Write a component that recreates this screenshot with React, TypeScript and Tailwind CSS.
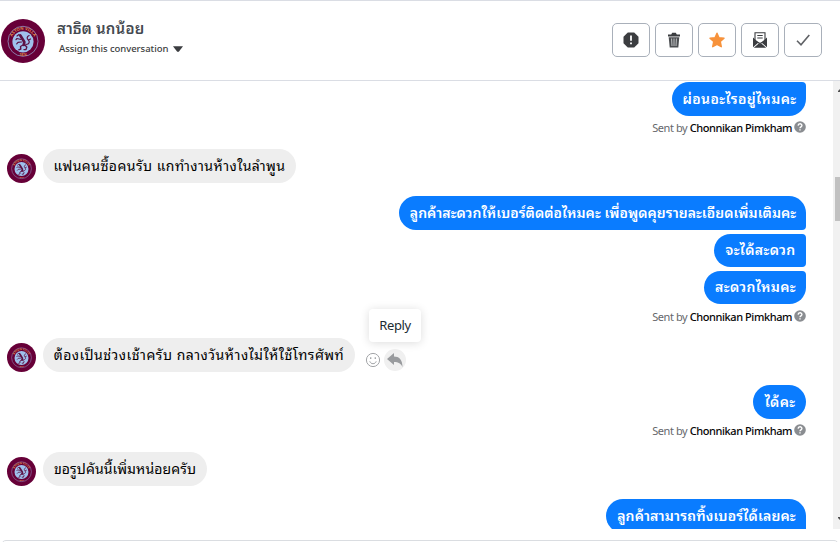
import clsx from 'clsx';

type Corner = 'first' | 'middle' | 'last' | 'single';

function Crest({ id, className }: { id: string; className: string }) {
  return (
    <svg viewBox="0 0 44 44" className={clsx('block shrink-0', className)}>
      <circle cx="22" cy="22" r="22" fill="#670038" />
      <circle cx="22" cy="22.3" r="15" fill="none" stroke="#8f86b4" strokeWidth="0.9" />
      <circle cx="22" cy="22.8" r="10.600" fill="#9fc1ec" />
      <path id={id} d="M10.600 19.500a11.800 11.800 0 0 1 22.800 0" fill="none" />
      <text fontSize="4.2" fontWeight="700" fill="#e08a45">
        <textPath href={`#${id}`} startOffset="50%" textAnchor="middle">
          ASTON VILLA
        </textPath>
      </text>
      <text x="22" y="36.500" fontSize="3" fontWeight="700" textAnchor="middle" fill="#e08a45">
        1874
      </text>
      {/* rampant lion */}
      <g fill="none" stroke="#5c1345" strokeLinecap="round" strokeLinejoin="round">
        <path d="M19.300 16.500l2.200 3.500 1.800 3-.5 3" strokeWidth="2.700" />
        <path d="M18 15.500l-2 1.500M20 20.500l-4-1-1 1.200M20.500 23l-3.500.3-1.300 1.500" strokeWidth="1.200" />
        <path d="M22 26l-2.500 1.500.3 2.500-2 .8M23.800 26l2 2-.8 2.600h-2" strokeWidth="1.400" />
        <path d="M25 25.500c3.500 0 4-3 2.300-4.500s-1.500-3.500.8-4.500M27.500 21l2-1" strokeWidth="1.200" />
      </g>
    </svg>
  );
}

const bubbleShape: Record<Corner, string> = {
  first: 'rounded-[17px] rounded-br-[4px]',
  middle: 'rounded-l-[17px] rounded-r-[4px]',
  last: 'rounded-[17px] rounded-tr-[4px]',
  single: 'rounded-[17px]',
};

function Outgoing({ text, corner, className }: { text: string; corner: Corner; className: string }) {
  return (
    <div
      className={clsx(
        'ml-auto flex shrink-0 items-center justify-center whitespace-nowrap bg-[#0a7cff] pb-[2px] pl-px font-semibold text-white',
        bubbleShape[corner],
        className
      )}
    >
      {text}
    </div>
  );
}

function Incoming({ id, text, className }: { id: string; text: string; className: string }) {
  return (
    <div className="flex h-[34px] shrink-0 items-end gap-[7px]">
      <Crest id={id} className="size-[29px]" />
      <div
        className={clsx(
          'flex h-[34px] items-center justify-center whitespace-nowrap rounded-[17px] bg-[#eee] pb-[2px] text-black',
          className
        )}
      >
        {text}
      </div>
    </div>
  );
}

function SentBy() {
  return (
    <div className="mt-[5px] flex h-[14px] shrink-0 items-center justify-end gap-[2px] whitespace-nowrap text-[11px] tracking-[-0.42px] text-[#65676b]">
      <span>
        Sent by <span className="font-medium text-[#050505]">Chonnikan Pimkham</span>
      </span>
      <svg viewBox="0 0 12 12" className="mb-[2px] size-[12px]">
        <circle cx="6" cy="6" r="5.8" fill="#8a8d91" />
        <path d="M4.1 4.600c.1-2.400 3.800-2.300 3.800-.2 0 1.500-1.900 1.400-1.900 2.900M6 8.300v1.300" fill="none" stroke="#fff" strokeWidth="1.400" />
      </svg>
    </div>
  );
}

const actions = [
  {
    label: 'Move to spam',
    icon: (
      <>
        <path d="M4.800.5h6.400l4.300 4.300v6.400l-4.300 4.300H4.800L.5 11.200V4.800z" fill="#3b3d40" />
        <path d="M8 3.500v5.200M8 10.400v1.800" stroke="#fff" strokeWidth="1.800" />
      </>
    ),
  },
  {
    label: 'Delete',
    icon: (
      <>
        <path d="M2 2.500h3.200L6.200.8h3.600l1 1.700H14v2H2z" fill="#3b3d40" />
        <path d="M2.700 5.300h10.600l-1 10.200H3.700z" fill="#4b4d50" />
        <path d="M5.600 6.500l.4 7.500M8 6.500V14M10.400 6.500L10 14" stroke="#d0d2d4" strokeWidth=".9" />
      </>
    ),
  },
  {
    label: 'Follow up',
    icon: (
      <path
        d="M8 1.200l2 4.500 5 .6-3.700 3.300 1 5.100L8 12.300l-4.300 2.400 1-5.100L1 6.300l5-.6z"
        fill="#f7923b"
        stroke="#f7923b"
        strokeWidth="1.400"
        strokeLinejoin="round"
      />
    ),
  },
  {
    label: 'Mark as unread',
    icon: (
      <>
        <path d="M3 .8h10v8L8 11.500 3 8.800z" fill="#fff" stroke="#3b3d40" strokeWidth="1.100" />
        <path d="M5.300 3.500h5.400M5.300 6h5.400" stroke="#3b3d40" strokeWidth="1.100" />
        <path d="M1 5.500l5.500 5L1 15.200zM15 5.500l-5.500 5 5.500 4.700z" fill="#3b3d40" />
        <path d="M1.800 15.700l5-4.300L8 12.200l1.200-.8 5 4.300z" fill="#3b3d40" />
      </>
    ),
  },
  {
    label: 'Move to done',
    icon: <path d="M2 8.800l4 4L14.300 3" fill="none" stroke="#606266" strokeWidth="1.600" />,
  },
];

export default function App() {
  return (
    <div className="flex h-[542px] w-[840px] flex-col overflow-hidden bg-white font-['Noto_Sans','Noto_Sans_Thai_Looped','Loma','Waree','Tlwg_Typo','Garuda',sans-serif]">
      <header className="flex h-[81px] shrink-0 items-start border-y border-[#dadde4] pl-[1px] pr-[18px]">
        <Crest id="crest-header" className="mt-[18px] size-[44px]" />
        <div className="ml-[12px] mt-[16px]">
          <div className="h-[22px] text-[15px] font-semibold leading-[22px] tracking-[0.2px] text-[#444950]">สาธิต นกน้อย</div>
          <div className="flex h-[20px] items-center gap-[5px] pl-[2px] text-[9.5px] font-medium tracking-[-0.05px] text-[#3b3d40]">
            <span>Assign this conversation</span>
            <svg viewBox="0 0 10 6" className="h-[6px] w-[10px]">
              <path d="M0 .3h10L5.800 5.700H4.200z" fill="#3b3d40" />
            </svg>
          </div>
        </div>
        <div className="ml-auto mt-[22px] flex gap-[5px]">
          {actions.map(({ label, icon }) => (
            <button
              key={label}
              aria-label={label}
              className="flex h-[34px] w-[38px] items-center justify-center rounded-[5px] border border-[#a9b0ba]"
            >
              <svg viewBox="0 0 16 16" className="size-4">
                {icon}
              </svg>
            </button>
          ))}
        </div>
      </header>

      <main className="flex h-[448px] shrink-0 overflow-hidden text-[14px]">
        <div className="flex flex-1 flex-col pl-[7px] pr-[27px] pt-[1px]">
          <Outgoing text="ผ่อนอะไรอยู่ไหมคะ" corner="last" className="h-[34px] w-[134px] tracking-[0.4px]" />
          <SentBy />
          <div className="mt-[14px]">
            <Incoming id="crest-1" text="แฟนคนซื้อคนรับ แกทำงานห้างในลำพูน" className="w-[253px] tracking-[0.45px]" />
          </div>
          <Outgoing
            text="ลูกค้าสะดวกให้เบอร์ติดต่อไหมคะ เพื่อพูดคุยรายละเอียดเพิ่มเติมคะ"
            corner="first"
            className="mt-[13px] h-[34px] w-[407px] tracking-[0.05px]"
          />
          <Outgoing text="จะได้สะดวก" corner="middle" className="mt-[4px] h-[33px] w-[92px] tracking-[0.35px]" />
          <Outgoing text="สะดวกไหมคะ" corner="last" className="mt-[4px] h-[33px] w-[102px] tracking-[0.35px]" />
          <div className="pt-[1px]">
            <SentBy />
          </div>
          <div className="mt-[14px] flex shrink-0 items-center">
            <Incoming id="crest-2" text="ต้องเป็นช่วงเช้าครับ กลางวันห้างไม่ให้ใช้โทรศัพท์" className="w-[312px] tracking-[0.5px]" />
            <svg viewBox="0 0 16 16" className="ml-[10px] mt-[10px] size-4" fill="none" stroke="#a3a5a8">
              <circle cx="8" cy="8" r="6.600" />
              <path d="M4.800 9.300c.8 3.200 5.600 3.200 6.400 0" />
              <path d="M5.700 5.200v1.800M10.300 5.200v1.800" strokeWidth="1.300" />
            </svg>
            <div className="relative ml-[3px] mt-[10px] flex size-[22px] items-center justify-center rounded-full bg-[#f0f0f0]">
              <svg viewBox="0 0 16 16" className="size-4">
                <path d="M0 7l7-6v3.500c5 0 8.500 3 8.500 10.500-1.500-3.500-4-5-8.500-5V13z" fill="#999b9e" />
              </svg>
              <div className="absolute bottom-[29px] left-1/2 flex h-[33px] w-[52px] -translate-x-1/2 items-center justify-center rounded-[4px] bg-white text-[13px] tracking-[-0.35px] text-[#1c2b33] shadow-[0_1px_10px_rgba(0,0,0,0.14)]">
                Reply
              </div>
            </div>
          </div>
          <Outgoing text="ได้คะ" corner="single" className="mt-[13px] h-[34px] w-[53px] tracking-[0.3px]" />
          <SentBy />
          <div className="mt-[14px]">
            <Incoming id="crest-3" text="ขอรูปคันนี้เพิ่มหน่อยครับ" className="w-[164px] tracking-[0.1px]" />
          </div>
          <Outgoing text="ลูกค้าสามารถทิ้งเบอร์ได้เลยคะ" corner="first" className="mt-[13px] h-[34px] w-[200px] tracking-[0.15px]" />
        </div>
        <div className="flex w-[7px] flex-col items-end bg-[#f1f1f1]">
          <svg viewBox="0 0 2 4" className="mt-[7px] h-[4px] w-[2px]">
            <path d="M0 4V3l2-2v3z" fill="#505050" />
          </svg>
          <div className="mt-[85px] h-[44px] w-[5px] bg-[#c1c1c1]" />
          <svg viewBox="0 0 2 4" className="mb-[8px] mt-auto h-[4px] w-[2px]">
            <path d="M0 0v1l2 2V0z" fill="#505050" />
          </svg>
        </div>
      </main>

      <footer className="mt-[11px] h-[20px] w-[838px] shrink-0 self-center rounded-[5px] border border-[#dadde1]" />
    </div>
  );
}
